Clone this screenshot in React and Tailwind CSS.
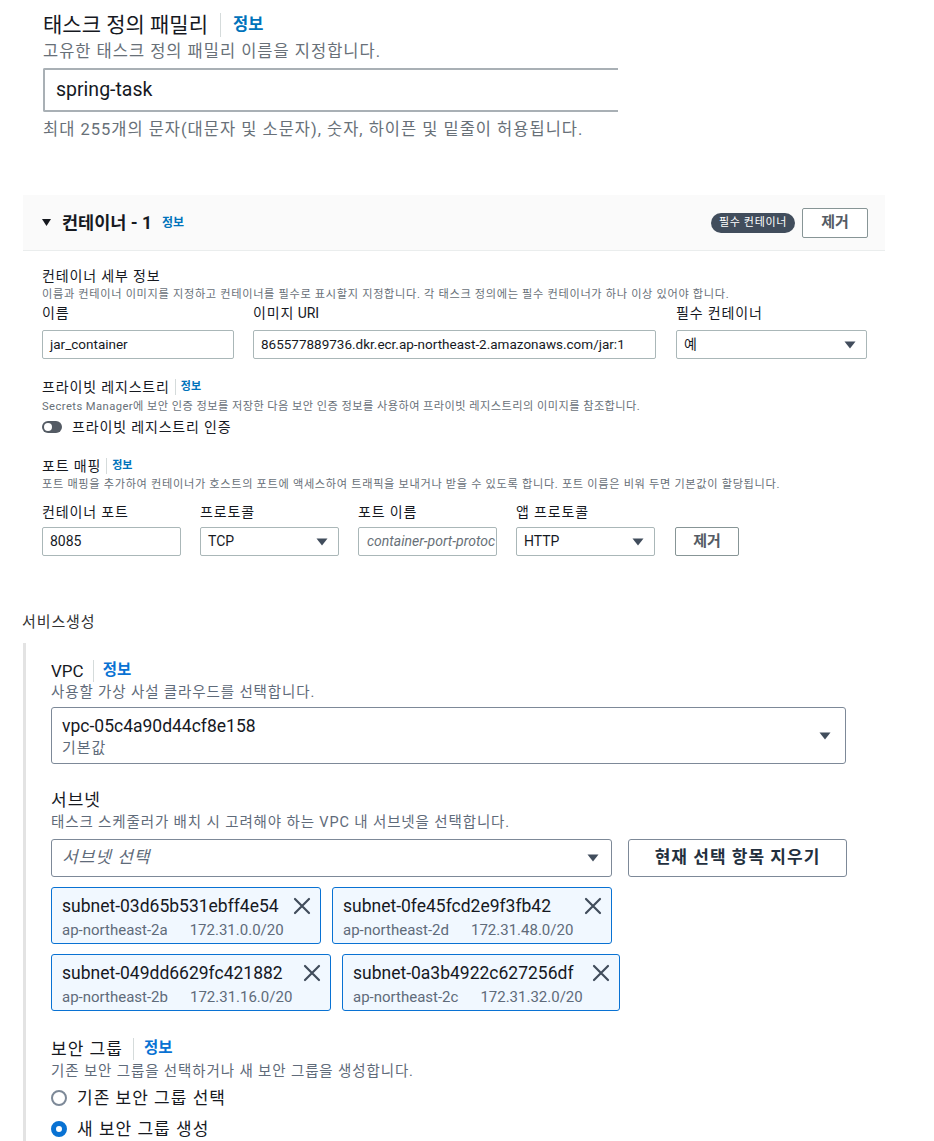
import React from "react";

const K = "tracking-[0.06em]";

function Caret({ className = "" }) {
  return (
    <svg className={className} width="12" height="8" viewBox="0 0 12 8">
      <path d="M0.5 0.5 H11.5 L6 7.5 Z" fill="#414d5c" />
    </svg>
  );
}

function XIcon() {
  return (
    <svg width="18" height="18" viewBox="0 0 18 18">
      <path d="M2 2 L16 16 M16 2 L2 16" stroke="#414d5c" strokeWidth="2.2" strokeLinecap="round" />
    </svg>
  );
}

function Token({ w, id, zone, cidr }) {
  return (
    <div className={`${w} h-[57px] border border-[#0972d3] bg-[#f1f8ff] rounded-[3px] pl-[10px] pr-[9px] pt-[6px] flex justify-between`}>
      <div>
        <div className="text-[17.5px] leading-[24px] text-[#16191f]">{id}</div>
        <div className="mt-[2px] text-[15px] leading-[20px] text-[#5f6b7a] flex gap-[22px]">
          <span>{zone}</span>
          <span>{cidr}</span>
        </div>
      </div>
      <div className="pt-[3px]">
        <XIcon />
      </div>
    </div>
  );
}

function InfoSep({ h = "h-[22px]", mx = "mx-[12px]" }) {
  return <span className={`${h} ${mx} w-px bg-[#d5dbdb]`} />;
}

export default function App() {
  return (
    <div className="w-[934px] h-[1141px] bg-white overflow-hidden text-[#16191f] font-['Roboto','Noto_Sans_CJK_KR',sans-serif]">
      {/* Section 1 */}
      <div className="pt-[11px] pl-[43px]">
        <div className="flex items-center h-[28px]">
          <span className="text-[21px] leading-[28px]">태스크 정의 패밀리</span>
          <InfoSep h="h-[24px]" mx="mx-[12px]" />
          <span className="text-[16.5px] font-bold text-[#0073bb]">정보</span>
        </div>
        <div className={`mt-[2px] text-[16.5px] leading-[22px] text-[#687078] ${K}`}>
          고유한 태스크 정의 패밀리 이름을 지정합니다.
        </div>
        <div className="mt-[5px] h-[44px] w-[575px] border-y-2 border-l-2 border-[#a9b0b5] rounded-l-[2px] flex items-center pl-[11px] text-[19.5px]">
          spring-task
        </div>
        <div className={`mt-[7px] text-[16.5px] leading-[22px] text-[#687078] ${K}`}>
          최대 255개의 문자(대문자 및 소문자), 숫자, 하이픈 및 밑줄이 허용됩니다.
        </div>
      </div>

      {/* Section 2 */}
      <div className="mt-[54px] ml-[23px] w-[862px]">
        <div className="h-[56px] bg-[#fafafa] border-b border-[#eaeded] flex items-center pl-[19px] pr-[17px]">
          <svg width="9" height="7" viewBox="0 0 9 7" className="mr-[11px]">
            <path d="M0 0 H9 L4.5 7 Z" fill="#16191f" />
          </svg>
          <span className="text-[17.5px] font-bold leading-[24px]">컨테이너 - 1</span>
          <span className="ml-[10px] text-[12px] font-bold text-[#0073bb]">정보</span>
          <span className={`ml-auto h-[20px] px-[8px] rounded-full bg-[#414d5c] text-white text-[11px] leading-[20px] ${K}`}>
            필수 컨테이너
          </span>
          <button className="ml-[7px] w-[66px] h-[30px] border border-[#879596] rounded-[2px] bg-white text-[15px] font-semibold text-[#545b64]">
            제거
          </button>
        </div>

        <div className="pl-[19px]">
          <div className={`mt-[16px] text-[14px] leading-[18px] ${K}`}>컨테이너 세부 정보</div>
          <div className={`mt-[2px] text-[11.2px] leading-[16px] text-[#687078] ${K}`}>
            이름과 컨테이너 이미지를 지정하고 컨테이너를 필수로 표시할지 지정합니다. 각 태스크 정의에는 필수 컨테이너가 하나 이상 있어야 합니다.
          </div>
          <div className="mt-[1px] flex gap-[19px]">
            <div className="w-[192px]">
              <div className={`text-[14px] leading-[18px] ${K}`}>이름</div>
              <div className="mt-[8px] h-[29px] border border-[#aab7b8] rounded-[2px] flex items-center pl-[7px] text-[13.5px]">
                jar_container
              </div>
            </div>
            <div className="w-[403px]">
              <div className="text-[14px] leading-[18px]">
                <span className={K}>이미지</span> URI
              </div>
              <div className="mt-[8px] h-[29px] border border-[#aab7b8] rounded-[2px] flex items-center pl-[7px] text-[13.5px]">
                865577889736.dkr.ecr.ap-northeast-2.amazonaws.com/jar:1
              </div>
            </div>
            <div className="ml-[1px] w-[191px]">
              <div className={`text-[14px] leading-[18px] ${K}`}>필수 컨테이너</div>
              <div className="mt-[8px] h-[29px] border border-[#aab7b8] rounded-[2px] flex items-center justify-between pl-[7px] pr-[10px] text-[14px]">
                <span>예</span>
                <Caret />
              </div>
            </div>
          </div>

          <div className="mt-[19px] flex items-center h-[18px]">
            <span className={`text-[14px] leading-[18px] ${K}`}>프라이빗 레지스트리</span>
            <InfoSep h="h-[16px]" mx="mx-[5px]" />
            <span className="text-[11px] font-bold text-[#0073bb]">정보</span>
          </div>
          <div className="mt-[3px] text-[11.2px] leading-[16px] text-[#687078] tracking-[0.04em]">
            Secrets Manager에 보안 인증 정보를 저장한 다음 보안 인증 정보를 사용하여 프라이빗 레지스트리의 이미지를 참조합니다.
          </div>
          <div className="mt-[2px] h-[20px] flex items-center">
            <span className="w-[20px] h-[12px] rounded-full bg-[#545b64] flex items-center pl-[2px]">
              <span className="w-[8px] h-[8px] rounded-full bg-white" />
            </span>
            <span className={`ml-[10px] text-[14px] leading-[18px] ${K}`}>프라이빗 레지스트리 인증</span>
          </div>

          <div className="mt-[20px] flex items-center h-[18px]">
            <span className={`text-[14px] leading-[18px] ${K}`}>포트 매핑</span>
            <InfoSep h="h-[16px]" mx="mx-[5px]" />
            <span className="text-[11px] font-bold text-[#0073bb]">정보</span>
          </div>
          <div className={`mt-[2px] text-[11.2px] leading-[16px] text-[#687078] ${K}`}>
            포트 매핑을 추가하여 컨테이너가 호스트의 포트에 액세스하여 트래픽을 보내거나 받을 수 있도록 합니다. 포트 이름은 비워 두면 기본값이 할당됩니다.
          </div>
          <div className="mt-[10px] flex gap-[19px] items-end">
            <div className="w-[139px]">
              <div className={`text-[14px] leading-[18px] ${K}`}>컨테이너 포트</div>
              <div className="mt-[6px] h-[29px] border border-[#aab7b8] rounded-[2px] flex items-center pl-[7px] text-[14px]">
                8085
              </div>
            </div>
            <div className="w-[139px]">
              <div className={`text-[14px] leading-[18px] ${K}`}>프로토콜</div>
              <div className="mt-[6px] h-[29px] border border-[#aab7b8] rounded-[2px] flex items-center justify-between pl-[7px] pr-[10px] text-[14px]">
                <span>TCP</span>
                <Caret />
              </div>
            </div>
            <div className="w-[139px]">
              <div className={`text-[14px] leading-[18px] ${K}`}>포트 이름</div>
              <div className="mt-[6px] h-[29px] border border-[#aab7b8] rounded-[2px] flex items-center pl-[8px] text-[14px] italic text-[#687078] overflow-hidden whitespace-nowrap">
                container-port-protoc
              </div>
            </div>
            <div className="w-[139px]">
              <div className={`text-[14px] leading-[18px] ${K}`}>앱 프로토콜</div>
              <div className="mt-[6px] h-[29px] border border-[#aab7b8] rounded-[2px] flex items-center justify-between pl-[7px] pr-[10px] text-[14px]">
                <span>HTTP</span>
                <Caret />
              </div>
            </div>
            <button className="ml-[1px] w-[64px] h-[29px] border border-[#879596] rounded-[2px] bg-white text-[15px] font-semibold text-[#545b64]">
              제거
            </button>
          </div>
        </div>
      </div>

      {/* Section 3 */}
      <div className={`mt-[56px] ml-[22px] text-[15px] leading-[20px] text-[#333] ${K}`}>서비스생성</div>
      <div className="mt-[11px] ml-[23px] border-l-[3px] border-[#e3e3e3] pl-[25px] pt-[16px] pb-[40px]">
        <div className="flex items-center h-[24px]">
          <span className="text-[17px] leading-[24px]">VPC</span>
          <InfoSep h="h-[22px]" mx="mx-[9px]" />
          <span className="text-[15.5px] font-bold text-[#0972d3]">정보</span>
        </div>
        <div className={`text-[14.5px] leading-[20px] text-[#5f6b7a] ${K}`}>사용할 가상 사설 클라우드를 선택합니다.</div>
        <div className="mt-[4px] w-[795px] h-[57px] border border-[#7d8998] rounded-[3px] flex items-center justify-between pl-[10px] pr-[14px]">
          <div>
            <div className="text-[17.5px] leading-[24px]">vpc-05c4a90d44cf8e158</div>
            <div className={`text-[15px] leading-[20px] text-[#5f6b7a] ${K}`}>기본값</div>
          </div>
          <Caret />
        </div>

        <div className={`mt-[24px] text-[17px] leading-[24px] ${K}`}>서브넷</div>
        <div className={`mt-[1px] text-[14.5px] leading-[20px] text-[#5f6b7a] ${K}`}>
          태스크 스케줄러가 배치 시 고려해야 하는 VPC 내 서브넷을 선택합니다.
        </div>
        <div className="mt-[6px] flex gap-[16px]">
          <div className="w-[561px] h-[38px] border border-[#7d8998] rounded-[3px] flex items-center justify-between pl-[10px] pr-[12px]">
            <span className={`text-[17px] italic text-[#5f6b7a] ${K}`}>서브넷 선택</span>
            <Caret />
          </div>
          <button className={`w-[219px] h-[38px] border border-[#7d8998] rounded-[3px] bg-white text-[17px] font-bold text-[#232f3e] ${K}`}>
            현재 선택 항목 지우기
          </button>
        </div>
        <div className="mt-[10px] flex gap-[11px]">
          <Token w="w-[270px]" id="subnet-03d65b531ebff4e54" zone="ap-northeast-2a" cidr="172.31.0.0/20" />
          <Token w="w-[280px]" id="subnet-0fe45fcd2e9f3fb42" zone="ap-northeast-2d" cidr="172.31.48.0/20" />
        </div>
        <div className="mt-[10px] flex gap-[11px]">
          <Token w="w-[280px]" id="subnet-049dd6629fc421882" zone="ap-northeast-2b" cidr="172.31.16.0/20" />
          <Token w="w-[278px]" id="subnet-0a3b4922c627256df" zone="ap-northeast-2c" cidr="172.31.32.0/20" />
        </div>

        <div className="mt-[26px] flex items-center h-[24px]">
          <span className={`text-[17px] leading-[24px] ${K}`}>보안 그룹</span>
          <InfoSep h="h-[22px]" mx="mx-[10px]" />
          <span className="text-[15.5px] font-bold text-[#0972d3]">정보</span>
        </div>
        <div className={`mt-[1px] text-[14.5px] leading-[20px] text-[#5f6b7a] ${K}`}>
          기존 보안 그룹을 선택하거나 새 보안 그룹을 생성합니다.
        </div>
        <div className="mt-[4px] flex items-center h-[24px]">
          <span className="w-[16px] h-[16px] rounded-full border-2 border-[#7d8998] bg-white" />
          <span className={`ml-[10px] text-[17px] leading-[24px] ${K}`}>기존 보안 그룹 선택</span>
        </div>
        <div className="mt-[7px] flex items-center h-[24px]">
          <span className="w-[16px] h-[16px] rounded-full border-[5px] border-[#0972d3] bg-white" />
          <span className={`ml-[10px] text-[17px] leading-[24px] ${K}`}>새 보안 그룹 생성</span>
        </div>
      </div>
    </div>
  );
}
